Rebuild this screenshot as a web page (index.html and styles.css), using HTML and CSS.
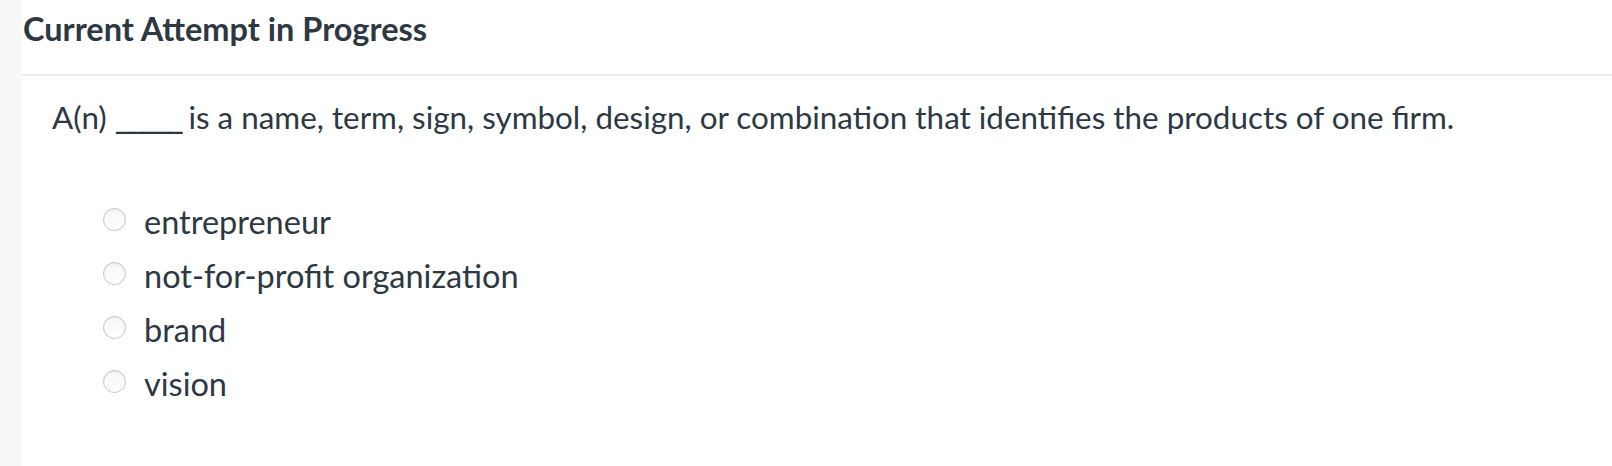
FILE: index.html
```html
<!DOCTYPE html>
<html lang="en">
<head>
<meta charset="utf-8">
<title>Current Attempt in Progress</title>
<link rel="stylesheet" href="styles.css">
</head>
<body>
<div class="page">
  <div class="rail"></div>
  <main class="main">
    <header class="head">
      <h1 class="title">Current Attempt in Progress</h1>
    </header>
    <section class="question">
      <p class="prompt">A(n) <span class="blank">_____</span> is a name, term, sign, symbol, design, or combination that identifies the products of one firm.</p>
      <ul class="options">
        <li class="option"><input class="radio" type="radio" name="q1" id="o1"><label for="o1">entrepreneur</label></li>
        <li class="option"><input class="radio" type="radio" name="q1" id="o2"><label for="o2">not-for-profit organization</label></li>
        <li class="option"><input class="radio" type="radio" name="q1" id="o3"><label for="o3">brand</label></li>
        <li class="option"><input class="radio" type="radio" name="q1" id="o4"><label for="o4">vision</label></li>
      </ul>
    </section>
  </main>
</div>
</body>
</html>
```

FILE: styles.css
```css
html, body {
  margin: 0;
  padding: 0;
  background: #ffffff;
}

body {
  font-family: Lato, "Open Sans", "Liberation Sans", sans-serif;
  color: #2d3843;
}

.page {
  display: flex;
  min-height: 466px;
}

.rail {
  width: 22px;
  flex: 0 0 22px;
  background: #f8f8f8;
}

.main {
  flex: 1;
}

.head {
  padding: 9px 0 25px 1px;
  border-bottom: 2px solid #ececec;
}

.title {
  margin: 0;
  font-size: 32.5px;
  line-height: 40px;
  font-weight: 700;
  color: #2d3843;
}

.question {
  padding-left: 30px;
}

.prompt {
  margin: 21px 0 0 0;
  font-size: 31.4px;
  line-height: 40px;
  white-space: nowrap;
}

.blank {
  font-size: 36px;
  line-height: 0;
  letter-spacing: -3.4px;
}

.options {
  list-style: none;
  margin: 58px 0 0 0;
  padding: 0 0 0 51px;
}

.option {
  display: flex;
  align-items: flex-start;
  font-size: 32.5px;
  line-height: 54px;
}

.radio {
  appearance: none;
  -webkit-appearance: none;
  box-sizing: border-box;
  width: 23px;
  height: 23px;
  margin: 13px 18px 0 0;
  border: 1px solid #c4c4c4;
  border-radius: 50%;
  background: linear-gradient(#f6f6f6, #ffffff);
  box-shadow: inset 0 1px 1px rgba(0, 0, 0, 0.05);
  flex: 0 0 23px;
}

.option label {
  cursor: pointer;
}
```
